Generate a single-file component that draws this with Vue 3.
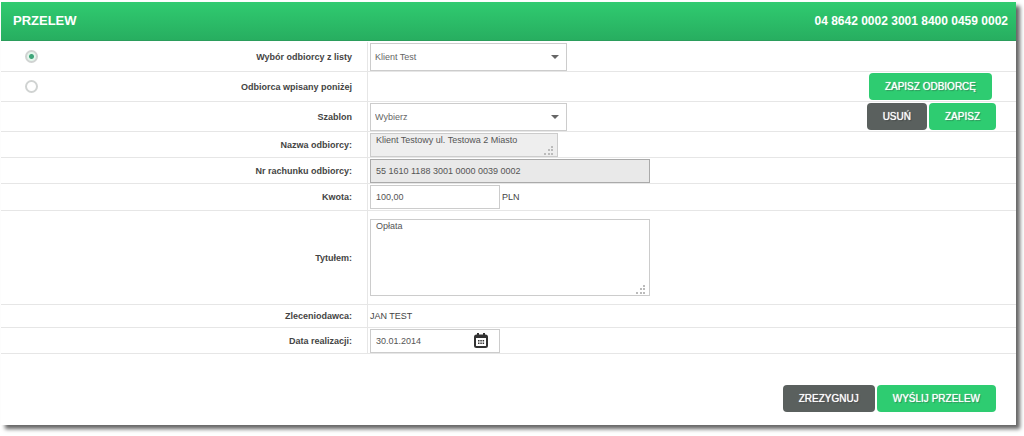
<script setup>
import { ref } from 'vue'

const source = ref('list')
const recipient = ref('Klient Test')
const template = ref('Wybierz')
const name = ref('Klient Testowy ul. Testowa 2 Miasto')
const account = ref('55 1610 1188 3001 0000 0039 0002')
const amount = ref('100,00')
const title = ref('Opłata')
const date = ref('30.01.2014')
</script>

<template>
  <form class="panel" @submit.prevent>
    <header class="head">
      <h1>PRZELEW</h1>
      <span class="number">04 8642 0002 3001 8400 0459 0002</span>
    </header>

    <div class="row tall">
      <div class="caption">
        <input id="src-list" v-model="source" type="radio" name="source" value="list" />
        <label for="src-list">Wybór odbiorcy z listy</label>
      </div>
      <div class="field">
        <span class="drop">
          <select v-model="recipient" aria-label="Odbiorca"><option>Klient Test</option></select>
          <svg viewBox="0 0 8 4"><path d="M0 0h8L4 4z" /></svg>
        </span>
      </div>
    </div>

    <div class="row tall">
      <div class="caption">
        <input id="src-own" v-model="source" type="radio" name="source" value="own" />
        <label for="src-own">Odbiorca wpisany poniżej</label>
      </div>
      <div class="field">
        <div class="actions inset"><button type="button">ZAPISZ ODBIORCĘ</button></div>
      </div>
    </div>

    <div class="row tall">
      <div class="caption"><label for="template">Szablon</label></div>
      <div class="field">
        <span class="drop">
          <select id="template" v-model="template"><option>Wybierz</option></select>
          <svg viewBox="0 0 8 4"><path d="M0 0h8L4 4z" /></svg>
        </span>
        <div class="actions">
          <button type="button" class="dark">USUŃ</button>
          <button type="button">ZAPISZ</button>
        </div>
      </div>
    </div>

    <div class="row">
      <div class="caption"><label for="name">Nazwa odbiorcy:</label></div>
      <div class="field">
        <span class="area">
          <textarea id="name" v-model="name" class="name" readonly></textarea>
          <svg class="grip" viewBox="0 0 9 9"><path d="M7 0h2v2H7zM4 3h2v2H4zM7 3h2v2H7zM0 7h2v2H0zM4 7h2v2H4zM7 7h2v2H7z" /></svg>
        </span>
      </div>
    </div>

    <div class="row">
      <div class="caption"><label for="account">Nr rachunku odbiorcy:</label></div>
      <div class="field"><input id="account" v-model="account" class="text wide" type="text" readonly /></div>
    </div>

    <div class="row amount">
      <div class="caption"><label for="amount">Kwota:</label></div>
      <div class="field">
        <input id="amount" v-model="amount" class="text" type="text" />
        <span class="unit">PLN</span>
      </div>
    </div>

    <div class="row message">
      <div class="caption"><label for="title">Tytułem:</label></div>
      <div class="field">
        <span class="area">
          <textarea id="title" v-model="title" class="title"></textarea>
          <svg class="grip" viewBox="0 0 9 9"><path d="M7 0h2v2H7zM4 3h2v2H4zM7 3h2v2H7zM0 7h2v2H0zM4 7h2v2H4zM7 7h2v2H7z" /></svg>
        </span>
      </div>
    </div>

    <div class="row short">
      <div class="caption"><span>Zleceniodawca:</span></div>
      <div class="field">JAN TEST</div>
    </div>

    <div class="row">
      <div class="caption"><label for="date">Data realizacji:</label></div>
      <div class="field">
        <span class="area">
          <input id="date" v-model="date" class="text" type="text" />
          <button type="button" class="calendar" aria-label="Kalendarz">
            <svg viewBox="0 0 14 15">
              <path class="frame" d="M2.500 2.500h9q1.500 0 1.500 1.500v8.500q0 1.500-1.500 1.500h-9q-1.500 0-1.500-1.500V4q0-1.500 1.500-1.500z" />
              <path d="M1 2.500h12V5H1zM3 0h2v3H3zM9 0h2v3H9zM4 7h1.500v1.500H4zM6.300 7h1.500v1.500H6.300zM8.600 7h1.500v1.500H8.600zM4 9.500h1.500V11H4zM6.300 9.500h1.500V11H6.300zM8.600 9.500h1.500V11H8.600z" />
            </svg>
          </button>
        </span>
      </div>
    </div>

    <footer class="foot">
      <button type="button" class="dark">ZREZYGNUJ</button>
      <button type="submit">WYŚLIJ PRZELEW</button>
    </footer>
  </form>
</template>

<style>
body {
  background: #fff;
}
</style>

<style scoped>
* {
  box-sizing: border-box;
}
.panel {
  margin: 2px 8px 12px 1px;
  background: #fff;
  box-shadow: 4px 4px 4px #666;
  font: 9px/12px "Liberation Sans", Arial, sans-serif;
  color: #444;
}
.head {
  display: flex;
  align-items: center;
  justify-content: space-between;
  height: 39px;
  margin-bottom: 1px;
  padding: 0 8px 0 12px;
  border-bottom: 1px solid #2b9d5c;
  background: linear-gradient(#30cb70, #27ae60);
  color: #fff;
  font-size: 12px;
  font-weight: bold;
}
h1 {
  margin: 0;
  font-size: 13px;
}
.row {
  display: grid;
  grid-template-columns: 367px 1fr;
  min-height: 26px;
  border-bottom: 1px solid #e6e6e6;
}
.tall {
  min-height: 30px;
}
.short {
  min-height: 23px;
}
.amount {
  min-height: 27px;
}
.message {
  min-height: 94px;
}
.caption {
  display: flex;
  align-items: center;
  padding: 0 15px 0 24px;
  border-right: 1px solid #e6e6e6;
  font-weight: bold;
}
.caption > :last-child {
  margin-left: auto;
}
.field {
  display: flex;
  align-items: center;
  padding-left: 2px;
}
.unit {
  margin-left: 2px;
}
input,
textarea,
select,
button {
  margin: 0;
  font: inherit;
}
input[type="radio"] {
  appearance: none;
  width: 13px;
  height: 13px;
  border: 2px solid #d0d3d2;
  border-radius: 50%;
  background: #fff;
}
input[type="radio"]:checked {
  background: radial-gradient(circle, #3fa57a 0 2px, #e4f6ec 3px);
}
.drop,
.area {
  display: flex;
  position: relative;
}
select {
  appearance: none;
  width: 197px;
  height: 28px;
  padding: 0 4px;
  border: 1px solid #ccc;
  border-radius: 0;
  background: #fff;
  color: #666;
}
.drop svg {
  position: absolute;
  right: 8px;
  top: 12px;
  width: 8px;
  height: 4px;
  fill: #666;
  pointer-events: none;
}
.text {
  width: 130px;
  height: 24px;
  padding: 0 5px;
  border: 1px solid #ccc;
  background: #fff;
  color: #555;
}
.wide {
  width: 280px;
  border-color: #aaa;
  background: #e9e9e9;
}
textarea {
  display: block;
  padding: 0 5px;
  border: 1px solid #ccc;
  resize: none;
  overflow: hidden;
  color: #555;
}
.name {
  width: 188px;
  height: 24px;
  background: #eee;
}
.title {
  width: 280px;
  height: 77px;
}
.grip {
  position: absolute;
  right: 5px;
  bottom: 2px;
  width: 9px;
  height: 9px;
  fill: #bbb;
}
button {
  height: 27px;
  padding: 0 16px;
  border: 0;
  border-radius: 4px;
  background: #2ecc71;
  color: #fff;
  font-size: 10px;
  text-shadow: 0 0 1px #fff, 1px 1px 1px #0005;
}
.dark {
  background: #5a605e;
}
.actions {
  display: flex;
  gap: 2px;
  margin-left: auto;
  padding-right: 20px;
}
.inset {
  padding-right: 24px;
}
.calendar {
  position: absolute;
  right: 12px;
  top: 4px;
  width: 14px;
  height: 15px;
  padding: 0;
  background: none;
}
.calendar svg {
  display: block;
  fill: #333;
}
.calendar .frame {
  fill: #fff;
  stroke: #333;
  stroke-width: 2;
}
.foot {
  display: flex;
  justify-content: flex-end;
  gap: 2px;
  padding: 31px 20px 13px;
}
</style>
